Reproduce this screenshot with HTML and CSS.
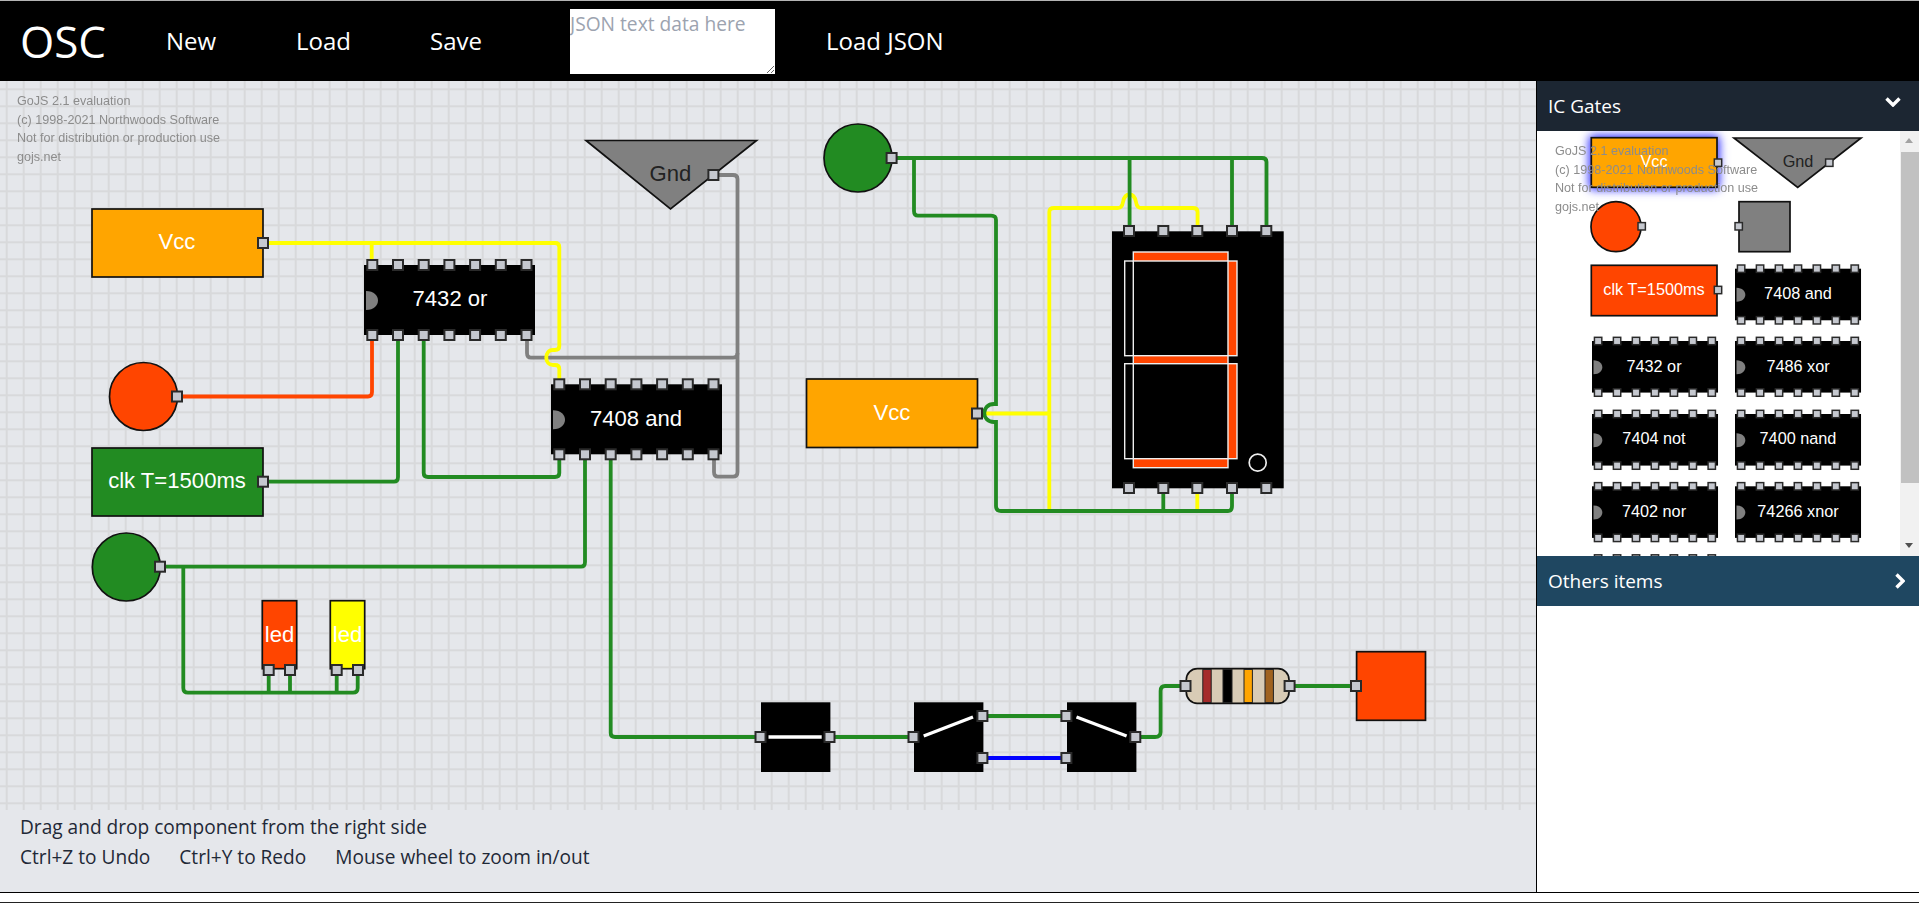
FILE: index.html
```html
<!DOCTYPE html>
<html lang="en">
<head>
<meta charset="utf-8">
<title>OSC</title>
<link rel="stylesheet" href="styles.css">
</head>
<body>
<header class="topbar">
  <a class="brand">OSC</a>
  <a class="nav">New</a>
  <a class="nav">Load</a>
  <a class="nav">Save</a>
  <textarea class="json" placeholder="JSON text data here"></textarea>
  <a class="nav">Load JSON</a>
</header>
<main class="main">
  <section class="work">
    <svg class="canvas" viewBox="0 81 1536 729" width="1536" height="729">
      <defs>
        <pattern id="grid" patternUnits="userSpaceOnUse" x="5.7" y="88.3" width="17" height="17">
          <rect class="gridline" x="0" y="0" width="2" height="17"/>
          <rect class="gridline" x="0" y="0" width="17" height="2"/>
        </pattern>
        <g id="port"><rect class="port" x="-5" y="-5" width="10" height="10"/></g>
        <g id="ic">
          <rect class="chip" x="0" y="0" width="171" height="70"/>
          <path class="notch" d="M2 26 C10 26 14 31 14 35.5 C14 40 10 45 2 45 Z"/>
          <use href="#port" x="8.3" y="0"/><use href="#port" x="34" y="0"/><use href="#port" x="59.7" y="0"/><use href="#port" x="85.4" y="0"/><use href="#port" x="111.1" y="0"/><use href="#port" x="136.8" y="0"/><use href="#port" x="162.5" y="0"/>
          <use href="#port" x="8.3" y="70"/><use href="#port" x="34" y="70"/><use href="#port" x="59.7" y="70"/><use href="#port" x="85.4" y="70"/><use href="#port" x="111.1" y="70"/><use href="#port" x="136.8" y="70"/><use href="#port" x="162.5" y="70"/>
        </g>
      </defs>
      <rect class="gridfill" x="0" y="81" width="1536" height="729"/>

      <g class="watermark">
        <text x="17" y="105">GoJS 2.1 evaluation</text>
        <text x="17" y="124">(c) 1998-2021 Northwoods Software</text>
        <text x="17" y="142">Not for distribution or production use</text>
        <text x="17" y="161">gojs.net</text>
      </g>

      <g class="wire w-gray">
        <path d="M713 175 H733 Q737.5 175 737.5 179 V472 Q737.5 476.7 733 476.7 H718 Q714 476.7 714 472 V455"/>
        <path d="M527 335 V353 Q527 357.7 531 357.7 H733 Q737.5 357.7 737.5 353"/>
      </g>
      <g class="wire w-yellow">
        <path d="M263 243 H555 Q559.3 243 559.3 247 V346 Q559.3 350 555 350 H553 C544 350 544 365 553 365 H555 Q559.3 365 559.3 369 V384"/>
        <path d="M371.7 243 V265"/>
        <path d="M977 413.5 H1049.3"/>
        <path d="M1049.3 510 V212 Q1049.3 208 1054 208 H1118 Q1122 208 1123 202 C1125 192 1134 192 1136 202 Q1137 208 1141 208 H1193 Q1197.6 208 1197.6 212 V231"/>
        <path d="M1197.3 488 V510"/>
      </g>
      <g class="wire w-orange"><path d="M177 396.5 H368 Q372 396.5 372 392 V335"/></g>
      <g class="wire w-blue"><path d="M982 758 H1066"/></g>
      <g class="wire w-green">
        <path d="M263 481.7 H394 Q398 481.7 398 477 V335"/>
        <path d="M423.7 335 V473 Q423.7 477 428 477 H555 Q559.3 477 559.3 473 V454"/>
        <path d="M160 566.7 H581 Q585 566.7 585 562 V454"/>
        <path d="M610.7 454 V733 Q610.7 737 615 737 H760"/>
        <path d="M183.3 566.7 V688 Q183.3 692.7 188 692.7 H353 Q357.7 692.7 357.7 688 V670"/>
        <path d="M268.7 692.7 V670 M290 692.7 V670 M336.7 692.7 V670"/>
        <path d="M830 737 H913 M982 716 H1066"/>
        <path d="M1135 737 H1155 Q1160.6 737 1160.6 732 V691 Q1160.6 686 1165 686 H1185"/>
        <path d="M1290 686 H1356"/>
        <path d="M892 158 H1262 Q1266.5 158 1266.5 162 V231 M1129.6 158 V231 M1232 158 V231"/>
        <path d="M914 158 V211 Q914 215.7 918 215.7 H991 Q996 215.7 996 220 V404 H994 C981 404 981 422 994 422 H996 V506 Q996 511 1001 511 H1228 Q1232 511 1232 506 V488"/>
        <path d="M1163.3 511 V488"/>
      </g>

      <!-- power and inputs -->
      <rect class="part f-orange" x="92" y="209" width="171" height="68"/>
      <text class="label" x="177" y="249">Vcc</text>
      <use href="#port" x="263" y="243"/>

      <polygon class="part f-gray" points="586,140.5 756.5,140.5 670.5,209"/>
      <text class="label dark" x="670.5" y="181">Gnd</text>
      <use href="#port" x="713.4" y="175"/>

      <circle class="part f-red" cx="143.5" cy="396.5" r="34"/>
      <use href="#port" x="177" y="396.5"/>

      <rect class="part f-green" x="92" y="448" width="171" height="68"/>
      <text class="label" x="177" y="488">clk T=1500ms</text>
      <use href="#port" x="263" y="481.7"/>

      <circle class="part f-green" cx="126.3" cy="567" r="34"/>
      <use href="#port" x="160" y="566.7"/>

      <!-- chips -->
      <use href="#ic" x="364" y="265"/>
      <text class="label" x="450" y="306">7432 or</text>
      <use href="#ic" x="551" y="384.3"/>
      <text class="label" x="636" y="426">7408 and</text>

      <!-- leds -->
      <rect class="part f-red" x="262.3" y="600.7" width="34.4" height="68"/>
      <text class="label" x="279.5" y="642">led</text>
      <use href="#port" x="268.7" y="670"/><use href="#port" x="290" y="670"/>
      <rect class="part f-yellow" x="330.3" y="600.7" width="34.4" height="68"/>
      <text class="label" x="347.5" y="642">led</text>
      <use href="#port" x="336.7" y="670"/><use href="#port" x="358" y="670"/>

      <!-- right side -->
      <circle class="part f-green" cx="858" cy="158" r="34"/>
      <use href="#port" x="891.6" y="158"/>
      <rect class="part f-orange" x="806.5" y="379" width="171" height="68.5"/>
      <text class="label" x="892" y="420">Vcc</text>
      <use href="#port" x="977" y="413.5"/>

      <rect class="chip" x="1112" y="231.3" width="171.7" height="257"/>
      <rect class="seg" x="1124.7" y="261" width="8.6" height="94.7"/>
      <rect class="seg" x="1124.7" y="363.7" width="8.6" height="95"/>
      <rect class="seg on" x="1133.3" y="252" width="94.7" height="9"/>
      <rect class="seg on" x="1228" y="261" width="9" height="94.7"/>
      <rect class="seg on" x="1133.3" y="355.7" width="94.7" height="8"/>
      <rect class="seg on" x="1228" y="363.7" width="9" height="95"/>
      <rect class="seg on" x="1133.3" y="458.7" width="94.7" height="9"/>
      <circle class="dot" cx="1257.7" cy="462.7" r="8.5"/>
      <use href="#port" x="1129" y="231"/><use href="#port" x="1163.3" y="231"/><use href="#port" x="1197.3" y="231"/><use href="#port" x="1232" y="231"/><use href="#port" x="1266.3" y="231"/>
      <use href="#port" x="1129" y="488"/><use href="#port" x="1163.3" y="488"/><use href="#port" x="1197.3" y="488"/><use href="#port" x="1232" y="488"/><use href="#port" x="1266.3" y="488"/>

      <!-- switches -->
      <rect class="chip" x="761" y="702.3" width="69.4" height="69.7"/>
      <path class="blade" d="M768.5 737 H821.7"/>
      <use href="#port" x="760.5" y="737"/><use href="#port" x="829.5" y="737"/>
      <rect class="chip" x="914" y="702.3" width="69.4" height="69.7"/>
      <path class="blade" d="M923.7 736 L973 717"/>
      <use href="#port" x="913.5" y="737"/><use href="#port" x="982.4" y="716"/><use href="#port" x="982.4" y="758"/>
      <rect class="chip" x="1067" y="702.3" width="69.4" height="69.7"/>
      <path class="blade" d="M1076.5 717 L1126.6 736"/>
      <use href="#port" x="1066.4" y="716"/><use href="#port" x="1066.4" y="758"/><use href="#port" x="1135.3" y="737"/>

      <!-- resistor -->
      <rect class="part f-tan" x="1186.3" y="668.7" width="102.7" height="34.6" rx="11" ry="11"/>
      <rect class="band b-red" x="1202.8" y="669.5" width="8.4" height="33"/>
      <rect class="band b-black" x="1223" y="669.5" width="9" height="33"/>
      <rect class="band b-orange" x="1244" y="669.5" width="8.4" height="33"/>
      <rect class="band b-brown" x="1265" y="669.5" width="8.4" height="33"/>
      <use href="#port" x="1185.5" y="686"/><use href="#port" x="1289.6" y="686"/>

      <rect class="part f-red" x="1356.6" y="651.7" width="68.9" height="68.6"/>
      <use href="#port" x="1356" y="686"/>
    </svg>
    <div class="help">
      <p>Drag and drop component from the right side</p>
      <p class="keys"><span>Ctrl+Z to Undo</span><span>Ctrl+Y to Redo</span><span>Mouse wheel to zoom in/out</span></p>
    </div>
  </section>

  <aside class="side">
    <div class="acc acc-dark">
      <span>IC Gates</span>
      <svg class="chev-down" viewBox="0 0 16 10" width="16" height="10"><path d="M1.5 1.5 L8 8 L14.5 1.5"/></svg>
    </div>
    <div class="palette">
      <svg class="pal" viewBox="1537 131 363 425" width="363" height="425">
        <defs>
          <g id="pic" transform="scale(0.737)"><use href="#ic"/></g>
          <g id="pport" transform="scale(0.737)"><use href="#port"/></g>
        </defs>
        <rect class="part f-orange glow" x="1591.3" y="137.7" width="125.7" height="49.6"/>
        <text class="plabel" x="1654" y="167">Vcc</text>
        <use href="#pport" x="1718" y="162.7"/>

        <polygon class="part f-gray" points="1734,138 1861,138 1797.7,187.5"/>
        <text class="plabel dark" x="1798" y="167">Gnd</text>
        <use href="#pport" x="1829.3" y="162.7"/>

        <circle class="part f-red" cx="1616" cy="226.7" r="25"/>
        <use href="#pport" x="1641.7" y="226.3"/>
        <rect class="part f-gray" x="1739" y="201.7" width="51" height="50"/>
        <use href="#pport" x="1738.7" y="226.3"/>

        <rect class="part f-red" x="1591.3" y="265.3" width="125.7" height="50.4"/>
        <text class="plabel" x="1654" y="295">clk T=1500ms</text>
        <use href="#pport" x="1718" y="290"/>

        <use href="#pic" x="1735" y="268.7"/><text class="plabel" x="1798" y="299">7408 and</text>
        <use href="#pic" x="1592" y="341"/><text class="plabel" x="1654" y="372">7432 or</text>
        <use href="#pic" x="1735" y="341"/><text class="plabel" x="1798" y="372">7486 xor</text>
        <use href="#pic" x="1592" y="414"/><text class="plabel" x="1654" y="444">7404 not</text>
        <use href="#pic" x="1735" y="414"/><text class="plabel" x="1798" y="444">7400 nand</text>
        <use href="#pic" x="1592" y="486.3"/><text class="plabel" x="1654" y="517">7402 nor</text>
        <use href="#pic" x="1735" y="486.3"/><text class="plabel" x="1798" y="517">74266 xnor</text>
        <use href="#pic" x="1592" y="558.5"/>

        <g class="watermark over">
          <text x="1555" y="155">GoJS 2.1 evaluation</text>
          <text x="1555" y="174">(c) 1998-2021 Northwoods Software</text>
          <text x="1555" y="192">Not for distribution or production use</text>
          <text x="1555" y="211">gojs.net</text>
        </g>
      </svg>
      <div class="scroll">
        <span class="arrow up"></span>
        <span class="thumb"></span>
        <span class="rest"></span>
        <span class="arrow down"></span>
      </div>
    </div>
    <div class="acc acc-blue">
      <span>Others items</span>
      <svg class="chev-right" viewBox="0 0 10 16" width="10" height="16"><path d="M1.5 1.5 L8 8 L1.5 14.5"/></svg>
    </div>
  </aside>
</main>
</body>
</html>
```

FILE: styles.css
```css
html, body { margin: 0; padding: 0; height: 100%; overflow: hidden; background: #fff; }
body { font-family: "Open Sans", "Noto Sans", sans-serif; border-bottom: 1px solid #222; box-sizing: border-box; height: 903px; }

.topbar {
  display: grid;
  grid-template-columns: 166px 130px 134px 140px 256px auto;
  align-items: center;
  height: 80px;
  background: #000;
  border-top: 1px solid #b4b4b4;
  color: #fff;
}
.brand { font-size: 44px; padding-left: 20px; line-height: 1; }
.nav { font-size: 24px; line-height: 1; }
.json {
  display: block;
  width: 205px;
  height: 65px;
  padding: 0;
  margin: 0;
  border: 0;
  box-sizing: border-box;
  background: #fff;
  font: 19.2px/30px "Open Sans", sans-serif;
  color: #111;
}
.json::placeholder { color: #9ca3af; opacity: 1; }

.main { display: flex; height: 811px; border-bottom: 1px solid #000; }
.work { width: 1536px; flex: none; background: #e5e7eb; display: flex; flex-direction: column; }
.canvas { display: block; flex: none; }
.help { padding: 2px 20px 0; color: #1f2937; font-size: 19.1px; line-height: 30px; }
.help p { margin: 0; }
.keys { display: flex; gap: 29px; }

.side { flex: 1; border-left: 1px solid #000; display: flex; flex-direction: column; background: #fff; min-width: 0; }
.acc { height: 50px; flex: none; display: flex; align-items: center; justify-content: space-between; color: #fff; font-size: 19px; padding: 0 11px; }
.acc-dark { background: #1c2632; }
.acc-blue { background: #1f4761; padding-right: 14px; }
.acc span { line-height: 1; }
.chev-down { align-self: flex-start; margin-top: 16px; margin-right: 7px; }
.chev-down path, .chev-right path { fill: none; stroke: #fff; stroke-width: 3.4; }

.palette { display: flex; height: 425px; flex: none; }
.pal { display: block; flex: none; }
.scroll { flex: 1; display: flex; flex-direction: column; background: #f1f1f1; }
.thumb { display: block; height: 331px; margin-left: 1px; background: #c1c1c1; }
.rest { flex: 1; display: block; }
.arrow { display: block; height: 21px; position: relative; }
.arrow.up::after, .arrow.down::after {
  content: "";
  position: absolute;
  left: 5px;
  border-left: 4.5px solid transparent;
  border-right: 4.5px solid transparent;
}
.arrow.up::after { top: 7px; border-bottom: 5px solid #a3a3a3; }
.arrow.down::after { top: 8px; border-top: 5px solid #505050; }

/* diagram */
.gridfill { fill: url(#grid); }
.gridline { fill: #d8d9db; }
.wire path { fill: none; stroke-width: 3.8; }
.w-green path { stroke: #228b22; }
.w-yellow path { stroke: #ffff00; }
.w-gray path { stroke: #808080; }
.w-orange path { stroke: #ff4500; }
.w-blue path { stroke: #0000ff; }
.part { stroke: #111; stroke-width: 1.7; }
.f-orange { fill: #ffa500; }
.f-gray { fill: #808080; }
.f-red { fill: #ff4500; }
.f-green { fill: #228b22; }
.f-yellow { fill: #ffff00; }
.f-tan { fill: #d8cbb5; }
.glow { filter: drop-shadow(0 0 4px #4848ff) drop-shadow(0 0 4px #8080ff); }
.port { fill: #c5c8cf; stroke: #2a2a2a; stroke-width: 2; }
.chip { fill: #000; }
.notch { fill: #808080; }
.seg { fill: #000; stroke: #eee; stroke-width: 1.4; }
.seg.on { fill: #ff4500; }
.dot { fill: none; stroke: #eee; stroke-width: 1.7; }
.blade { fill: none; stroke: #fff; stroke-width: 3.4; }
.band { stroke: #222; stroke-width: 1; }
.b-red { fill: #a52a2a; }
.b-black { fill: #000; }
.b-orange { fill: #ffa500; }
.b-brown { fill: #a0621e; }
.label, .plabel { font-family: "Liberation Sans", Arial, sans-serif; fill: #fff; text-anchor: middle; }
.label { font-size: 22.1px; }
.plabel { font-size: 16.25px; }
.dark { fill: #222; }
.watermark text { font-family: "Liberation Sans", Arial, sans-serif; font-size: 12.6px; fill: #8c8c8c; }
.watermark { filter: blur(0.5px); }
```
